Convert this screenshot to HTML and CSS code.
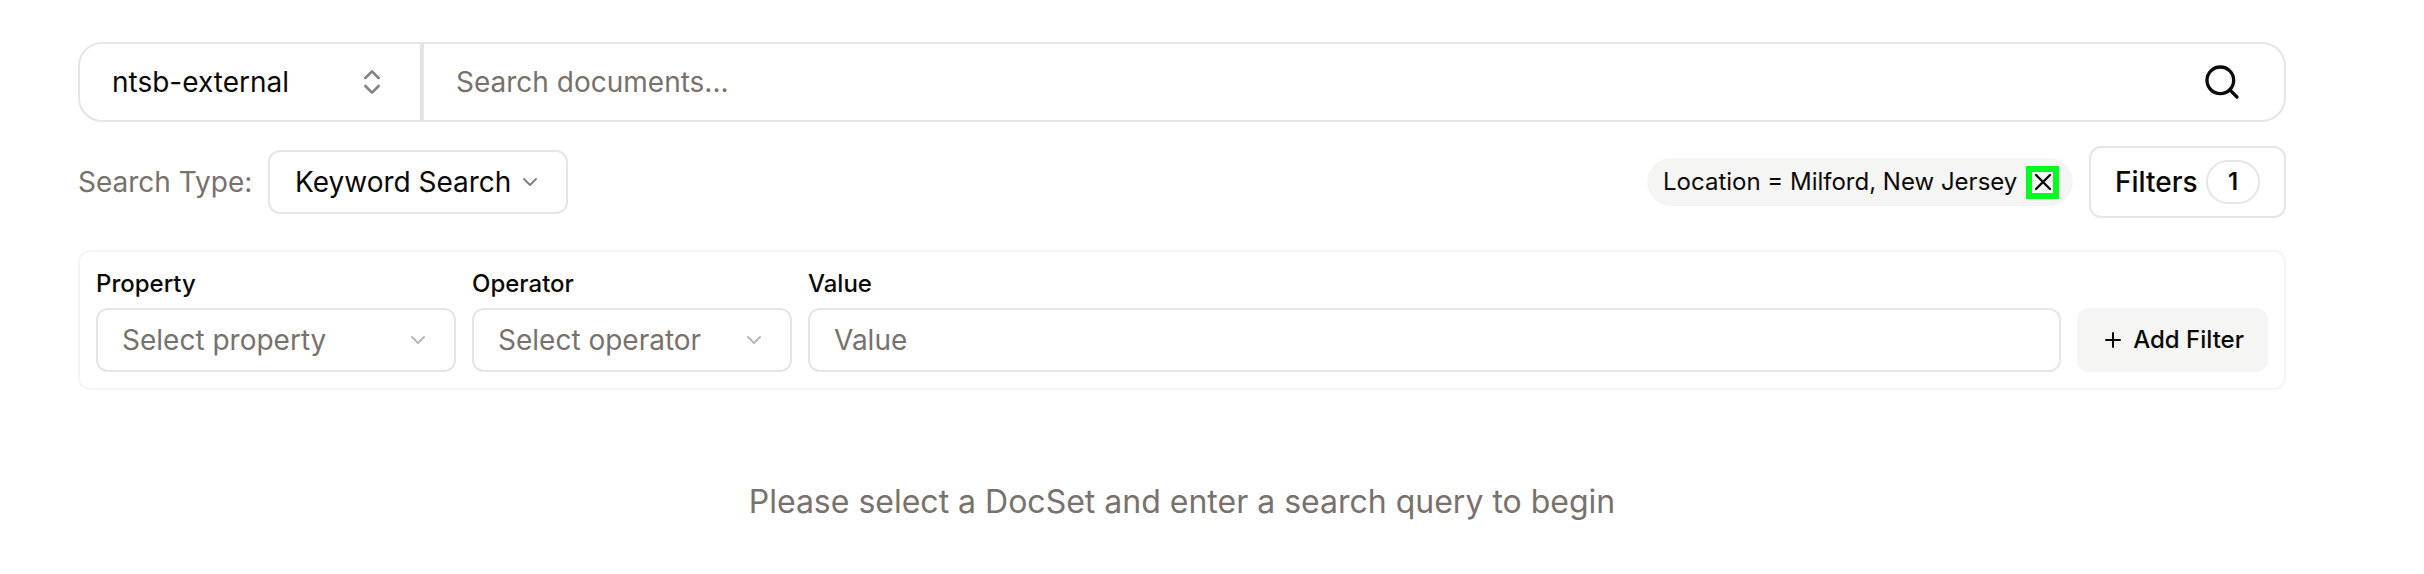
FILE: index.html
```html
<!DOCTYPE html>
<html lang="en">
<head>
<meta charset="utf-8">
<title>Document search</title>
<link rel="stylesheet" href="styles.css">
</head>
<body>
<main class="page">
  <div class="searchbar">
    <div class="docset">
      <span>ntsb-external</span>
      <svg class="docset-icon" viewBox="0 0 24 24"><path d="m7 15 5 5 5-5"/><path d="m7 9 5-5 5 5"/></svg>
    </div>
    <div class="query">
      <span>Search documents...</span>
      <svg class="search-icon" viewBox="0 0 24 24"><circle cx="11" cy="11" r="8"/><path d="m21 21-4.3-4.3"/></svg>
    </div>
  </div>
  <div class="toolbar">
    <span class="type-label">Search Type:</span>
    <div class="select type-select">
      <span>Keyword Search</span>
      <svg class="chevron" viewBox="0 0 24 24"><path d="m6 9 6 6 6-6"/></svg>
    </div>
    <div class="chip">
      <span>Location = Milford, New Jersey</span>
      <span class="chip-remove"><svg class="close-icon" viewBox="0 0 24 24"><path d="M18 6 6 18"/><path d="m6 6 12 12"/></svg></span>
    </div>
    <div class="filters"><span>Filters</span><span class="count">1</span></div>
  </div>
  <div class="panel">
    <div class="field property">
      <span class="label">Property</span>
      <div class="select"><span>Select property</span><svg class="chevron faint" viewBox="0 0 24 24"><path d="m6 9 6 6 6-6"/></svg></div>
    </div>
    <div class="field operator">
      <span class="label">Operator</span>
      <div class="select"><span>Select operator</span><svg class="chevron faint" viewBox="0 0 24 24"><path d="m6 9 6 6 6-6"/></svg></div>
    </div>
    <div class="field value">
      <span class="label">Value</span>
      <div class="select"><span>Value</span></div>
    </div>
    <div class="add"><svg class="plus-icon" viewBox="0 0 24 24"><path d="M5 12h14"/><path d="M12 5v14"/></svg><span>Add Filter</span></div>
  </div>
  <p class="hint">Please select a DocSet and enter a search query to begin</p>
</main>
</body>
</html>
```
FILE: styles.css
```css
* { box-sizing: border-box; }
body {
  margin: 0;
  background: #fff;
  color: #0c0a09;
  font-family: Inter, sans-serif;
  font-size: 28px;
  line-height: 40px;
  white-space: nowrap;
}
svg {
  display: block;
  flex: none;
  fill: none;
  stroke: currentColor;
  stroke-width: 2;
  stroke-linecap: round;
  stroke-linejoin: round;
}
.page { width: 2208px; margin-left: 78px; padding-top: 42px; }
.searchbar {
  display: flex;
  height: 80px;
  border: 2px solid #e5e5e5;
  border-radius: 24px;
}
.docset {
  display: flex;
  align-items: center;
  justify-content: space-between;
  width: 344px;
  padding: 0 32px;
  border-right: 4px solid #e5e5e5;
}
.docset-icon { width: 32px; height: 32px; color: #858484; }
.query {
  display: flex;
  flex: 1;
  align-items: center;
  justify-content: space-between;
  padding: 0 42px 0 32px;
  color: #78716c;
}
.search-icon { width: 40px; height: 40px; color: #0c0a09; }
.toolbar { display: flex; align-items: center; height: 72px; margin-top: 24px; }
.type-label { width: 190px; color: #78716c; }
.select {
  display: flex;
  align-items: center;
  justify-content: space-between;
  height: 64px;
  padding: 0 24px;
  border: 2px solid #e5e5e5;
  border-radius: 12px;
}
.type-select { width: 300px; padding-left: 25px; }
.chevron { width: 24px; height: 24px; color: #858484; }
.faint { color: #b9b6b4; }
.chip {
  display: flex;
  align-items: center;
  justify-content: space-between;
  width: 426px;
  height: 48px;
  margin-left: auto;
  padding: 0 14px 0 16px;
  border-radius: 24px;
  background: #f5f5f4;
  font-size: 24px;
}
.chip-remove {
  display: grid;
  place-items: center;
  width: 33px;
  height: 33px;
  border: 6px solid #00ff1e;
}
.close-icon { width: 28px; height: 28px; margin: -4px; }
.filters {
  display: flex;
  align-items: center;
  justify-content: space-between;
  width: 197px;
  height: 72px;
  margin-left: 16px;
  padding: 0 24px;
  border: 2px solid #e5e5e5;
  border-radius: 12px;
  font-weight: 500;
}
.count {
  display: grid;
  place-items: center;
  width: 54px;
  height: 44px;
  border: 2px solid #e5e5e5;
  border-radius: 22px;
  font-size: 24px;
  font-weight: 600;
}
.panel {
  display: flex;
  align-items: flex-end;
  gap: 16px;
  height: 140px;
  margin-top: 32px;
  padding: 16px;
  border: 2px solid #f5f5f4;
  border-radius: 12px;
}
.field { color: #78716c; }
.property { width: 360px; }
.operator { width: 320px; }
.value { flex: 1; }
.label {
  display: block;
  margin-bottom: 8px;
  color: #0c0a09;
  font-size: 24px;
  font-weight: 500;
  line-height: 32px;
}
.add {
  display: flex;
  align-items: center;
  justify-content: space-between;
  width: 191px;
  height: 64px;
  padding: 0 24px;
  border-radius: 12px;
  background: #f5f5f4;
  font-size: 24px;
  font-weight: 500;
}
.plus-icon { width: 24px; height: 24px; }
.hint {
  margin: 88px 0 0;
  padding-bottom: 48px;
  color: #78716c;
  font-size: 32px;
  line-height: 48px;
  text-align: center;
}
```
